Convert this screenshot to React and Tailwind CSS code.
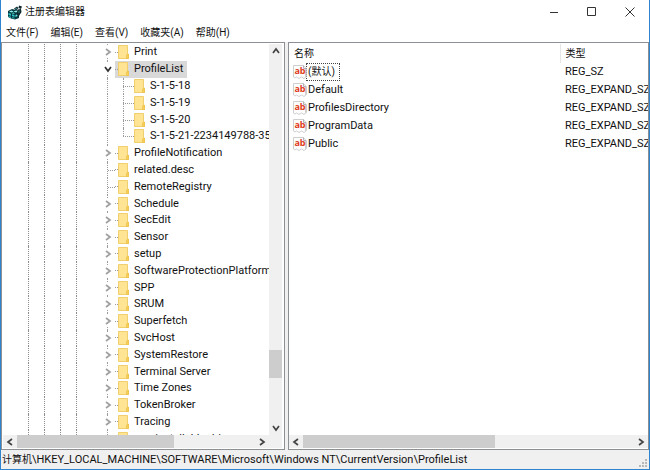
import clsx from 'clsx'

const KEYS = [
  { name: 'Print', kids: true },
  { name: 'ProfileList', kids: true, open: true },
  { name: 'S-1-5-18', child: true },
  { name: 'S-1-5-19', child: true },
  { name: 'S-1-5-20', child: true },
  { name: 'S-1-5-21-2234149788-35', child: true, last: true },
  { name: 'ProfileNotification', kids: true },
  { name: 'related.desc' },
  { name: 'RemoteRegistry' },
  { name: 'Schedule', kids: true },
  { name: 'SecEdit', kids: true },
  { name: 'Sensor', kids: true },
  { name: 'setup', kids: true },
  { name: 'SoftwareProtectionPlatform', kids: true },
  { name: 'SPP', kids: true },
  { name: 'SRUM', kids: true },
  { name: 'Superfetch', kids: true },
  { name: 'SvcHost', kids: true },
  { name: 'SystemRestore', kids: true },
  { name: 'Terminal Server', kids: true },
  { name: 'Time Zones', kids: true },
  { name: 'TokenBroker', kids: true },
  { name: 'Tracing', kids: true },
  { name: 'userinstallable.drivers', partial: true },
]

const VALUES = [
  { name: '(默认)', type: 'REG_SZ', focused: true },
  { name: 'Default', type: 'REG_EXPAND_SZ' },
  { name: 'ProfilesDirectory', type: 'REG_EXPAND_SZ' },
  { name: 'ProgramData', type: 'REG_EXPAND_SZ' },
  { name: 'Public', type: 'REG_EXPAND_SZ' },
]

const MENUS = ['文件(F)', '编辑(E)', '查看(V)', '收藏夹(A)', '帮助(H)']

function AppIcon() {
  return (
    <svg viewBox="0 0 16 16" className="w-4 h-4 shrink-0">
      <path d="M1 7l4-2 4 1 3 1v7l-4 1.500-4-1-3-1.500z" fill="#06393f" />
      <path d="M2 7.500l2.500-1 2 1-2 1zM6.500 7.500l2.500-1 2 1-2 1z" fill="#8ff0ee" />
      <path d="M1.500 9l2.500.8v1.900l-2.500-.8zM5 10.200l2.500.8v1.900L5 12.100zM1.500 12l2.500.8v1.200l-2.500-.9zM5 13.200l2.500.6v1L5 14z" fill="#2cc3c6" />
      <path d="M8.500 11l2-.8v1.900l-2 .8zM4.500 9.200l1.800-.7 1.700.7-1.700.6z" fill="#5fe2e2" />
      <path d="M7 4.500l3-2 1.500 1.500-2.500 2.500zM12 1.500l3 1-1 2.500-2.500-1zM10.500 5.500l3.500-.5.5 3-2.500 4-2-1z" fill="#10292d" />
      <path d="M8 4.500l1.500-.8.8.8-1.500.8zM11.500 7l1-1v2.500l-1 1z" fill="#2f8f93" />
    </svg>
  )
}

function Folder() {
  return (
    <svg viewBox="0 0 12 14" className="w-3 h-[14px] shrink-0">
      <path d="M.5.5h9v9h1v4h-10z" fill="#ffe494" stroke="#f1cf6c" />
      <path d="M8.500 13.500V10l2-1v4.500z" fill="#f7cf57" stroke="#e9bd45" strokeWidth=".6" />
    </svg>
  )
}

function StringIcon() {
  return (
    <span className="relative w-[14px] h-[14px] shrink-0 flex justify-center">
      <svg viewBox="0 0 14 14" className="absolute inset-0 w-full h-full">
        <path d="M.5.500h10l2.500 3v8.500l-2 1.500-2.500-1.500-2.500 1.500-2.500-1.500-1.500 1-1.500-1z" fill="#fdfdfd" stroke="#cfcfcf" />
        <path d="M10.500.5v3h2.500v8" fill="none" stroke="#b4b4b4" />
      </svg>
      <span className="relative text-[9px] leading-3 font-bold text-[#e03a1a] font-['Open_Sans',sans-serif]">ab</span>
    </span>
  )
}

function Chevron({ dir, className }) {
  const d = { up: 'M1 6l3-4 3 4', down: 'M1 2l3 4 3-4', left: 'M6 1L2 4l4 3', right: 'M2 1l4 3-4 3' }[dir]
  return (
    <svg viewBox="0 0 8 8" className={clsx('w-2 h-2 shrink-0', className)} fill="none" stroke="currentColor" strokeWidth="1.700">
      <path d={d} />
    </svg>
  )
}

function TreeRow({ item }) {
  const { name, kids, open, child, last, partial } = item
  return (
    <li className={clsx('basis-0 min-h-0 flex whitespace-nowrap', partial ? 'grow-2 overflow-hidden' : 'grow-7')}>
      <span className="w-[25px] shrink-0" />
      {[0, 1, 2, 3].map(i => <span key={i} className="w-4 shrink-0 border-l border-dotted border-[#8c8c8c]" />)}
      <span className="w-2 shrink-0" />
      <span className="w-[15px] shrink-0 relative flex flex-col">
        <span className="absolute inset-y-0 left-[7px] border-l border-dotted border-[#9a9a9a]" />
        {kids && (
          <button aria-label={`${open ? 'Collapse' : 'Expand'} ${name}`} className="relative my-auto h-3 bg-white flex items-center justify-center">
            <Chevron dir={open ? 'down' : 'right'} className={open ? 'text-[#333]' : 'text-[#a0a0a0]'} />
          </button>
        )}
        {!kids && !child && !partial && <span className="absolute top-1/2 left-2 right-0 border-t border-dotted border-[#9a9a9a]" />}
      </span>
      {child && (
        <span className="w-[19px] shrink-0 relative">
          <span className={clsx('absolute top-0 left-2 border-l border-dotted border-[#9a9a9a]', last ? 'h-1/2' : 'h-full')} />
          <span className="absolute top-1/2 left-2 right-0 border-t border-dotted border-[#9a9a9a]" />
        </span>
      )}
      <span className={clsx('flex items-center', open && 'bg-[#d9d9d9]', partial && 'h-[17px]')}>
        {!child && <span className="w-[3px] border-t border-dotted border-[#9a9a9a]" />}
        <Folder />
        <span className={clsx('pl-1', !child && 'pr-1')}>{name}</span>
      </span>
    </li>
  )
}

function HScroll({ thumb }) {
  return (
    <div className="h-[13px] shrink-0 flex bg-[#f0f0f0] text-[#444]">
      <button aria-label="Scroll left" className="w-[14px] shrink-0 flex items-center justify-center"><Chevron dir="left" /></button>
      <div className="flex-1"><div className={clsx('h-full bg-[#cdcdcd]', thumb)} /></div>
      <button aria-label="Scroll right" className="w-[14px] shrink-0 flex items-center justify-center"><Chevron dir="right" /></button>
    </div>
  )
}

function VScroll() {
  return (
    <div className="w-[13px] shrink-0 flex flex-col bg-[#f0f0f0] text-[#444]">
      <button aria-label="Scroll up" className="h-[14px] flex items-center justify-center"><Chevron dir="up" /></button>
      <div className="flex-1 flex flex-col">
        <div className="grow-81" />
        <div className="h-7 bg-[#cdcdcd]" />
        <div className="grow-12" />
      </div>
      <button aria-label="Scroll down" className="h-[14px] flex items-center justify-center"><Chevron dir="down" /></button>
    </div>
  )
}

function WindowButtons() {
  const btn = 'w-[38px] h-full flex items-center justify-center'
  return (
    <div className="h-full flex">
      <button aria-label="Minimize" className={btn}>
        <svg viewBox="0 0 10 10" className="w-[10px] h-[10px]" stroke="#333"><path d="M1 5.500h8" /></svg>
      </button>
      <button aria-label="Maximize" className={btn}>
        <svg viewBox="0 0 10 10" className="w-[10px] h-[10px]" fill="none" stroke="#333"><path d="M.500.500h8v8h-8z" /></svg>
      </button>
      <button aria-label="Close" className={btn}>
        <svg viewBox="0 0 10 10" className="w-[10px] h-[10px]" stroke="#333"><path d="M.5.5l9 9M9.500.5l-9 9" /></svg>
      </button>
    </div>
  )
}

export default function App() {
  return (
    <div className="h-screen flex flex-col overflow-hidden bg-white border border-t-0 border-[#2f84d0] text-[11px] leading-4 text-[#111] font-['Roboto','Noto_Sans_CJK_SC',sans-serif]">
      <header className="h-6 shrink-0 flex items-center pl-[6px]">
        <AppIcon />
        <h1 className="pl-[2px] flex-1 text-[10px]">注册表编辑器</h1>
        <WindowButtons />
      </header>
      <nav className="h-[18px] shrink-0 flex items-center gap-3 pl-[5px] text-[10px]">
        {MENUS.map(m => <button key={m}>{m}</button>)}
      </nav>
      <main className="flex-1 min-h-0 flex gap-[3px] bg-[#f0f0f0]">
        <section className="w-[284px] shrink-0 border border-[#8c8f94] bg-white p-px pr-[2px] flex flex-col">
          <div className="flex-1 min-h-0 flex">
            <ul className="flex-1 min-w-0 overflow-hidden flex flex-col">
              {KEYS.map(k => <TreeRow key={k.name} item={k} />)}
            </ul>
            <VScroll />
          </div>
          <div className="flex bg-[#f0f0f0]">
            <div className="flex-1"><HScroll thumb="w-[66%]" /></div>
            <div className="w-[13px]" />
          </div>
        </section>
        <section className="flex-1 min-w-0 border border-[#8c8f94] bg-white py-px flex flex-col">
          <div className="flex-1 min-h-0 overflow-hidden">
            <table className="w-full table-fixed text-left">
              <thead className="text-[10px]">
                <tr className="h-[19px]">
                  <th className="p-0 pl-[5px] font-normal">名称</th>
                  <th className="w-[88px] p-0 pl-[5px] font-normal border-l border-[#e5e5e5]">类型</th>
                </tr>
              </thead>
              <tbody className="whitespace-nowrap">
                {VALUES.map(v => (
                  <tr key={v.name} className="h-[18px]">
                    <td className="p-0 pl-1">
                      <span className="flex items-center">
                        <StringIcon />
                        <span className={clsx('pl-px pr-1', v.focused && 'text-[10px] outline outline-dotted outline-[#444]')}>{v.name}</span>
                      </span>
                    </td>
                    <td className="p-0 pl-[5px]">{v.type}</td>
                  </tr>
                ))}
              </tbody>
            </table>
          </div>
          <HScroll thumb="w-[58%]" />
        </section>
      </main>
      <footer className="h-[19px] shrink-0 flex items-center justify-between bg-[#f0f0f0] pl-px">
        <p><span className="text-[10px]">计算机</span>\HKEY_LOCAL_MACHINE\SOFTWARE\Microsoft\Windows NT\CurrentVersion\ProfileList</p>
        <svg viewBox="0 0 9 9" className="w-[9px] h-[9px] self-end mr-px mb-px" fill="#b8b8b8">
          <path d="M6 0h2v2H6zM3 3h2v2H3zM6 3h2v2H6zM0 6h2v2H0zM3 6h2v2H3zM6 6h2v2H6z" />
        </svg>
      </footer>
    </div>
  )
}
